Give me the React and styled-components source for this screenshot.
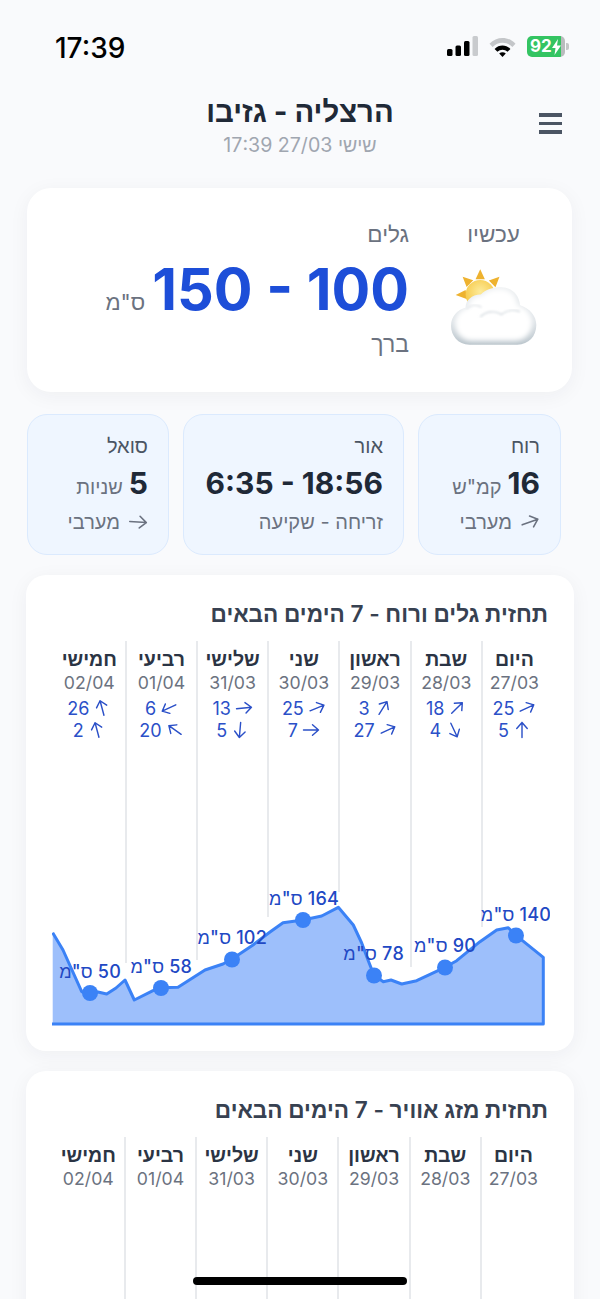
import React from "react";
import styled, { createGlobalStyle } from "styled-components";

const GlobalStyle = createGlobalStyle`
  html, body {
    margin: 0;
    padding: 0;
    background: #f9fafc;
  }
  * {
    box-sizing: border-box;
  }
`;

const days = [
  { name: "היום", date: "27/03", wave: [25, -25], wind: [5, -90], lineEnd: 286, weatherLine: true },
  { name: "שבת", date: "28/03", wave: [18, -45], wind: [4, 65], lineEnd: 326, weatherLine: true },
  { name: "ראשון", date: "29/03", wave: [3, -58], wind: [27, -25], lineEnd: 251, weatherLine: true },
  { name: "שני", date: "30/03", wave: [25, -22], wind: [7, 0], lineEnd: 276, weatherLine: true },
  { name: "שלישי", date: "31/03", wave: [13, -6], wind: [5, 95], lineEnd: 319, weatherLine: true },
  { name: "רביעי", date: "01/04", wave: [6, 155], wind: [20, -145], lineEnd: 322, weatherLine: true },
  { name: "חמישי", date: "02/04", wave: [26, -105], wind: [2, -105], lineEnd: 0, weatherLine: false },
];

const curve =
  "52.7,932.7 63,950 81.7,991.7 90,993 98,992 106.7,994 116,988 125,980 134.3,1000 153,990.7 160.7,987.7 178,987.3 205,970 223,964 231.7,959.3 253,945 270,932 283,922.7 303,920 321.7,916 338.3,907.3 353.3,925 361.7,943 368,960 374,975.3 383.3,981.7 391,980 401.7,984 416.7,980.7 445,967.3 456.7,960.7 480,941.7 496.7,930 508.3,927.7 516,935.3 543.3,957.3";

const dots = [
  { x: 516, y: 935.5, labelX: 551, labelY: 921, value: 140 },
  { x: 445, y: 967.5, labelX: 476, labelY: 952, value: 90 },
  { x: 374, y: 975.5, labelX: 404, labelY: 960, value: 78 },
  { x: 303, y: 920, labelX: 339, labelY: 905, value: 164 },
  { x: 232, y: 959.5, labelX: 267, labelY: 944, value: 102 },
  { x: 161, y: 988, labelX: 192, labelY: 973, value: 58 },
  { x: 90, y: 993, labelX: 121, labelY: 978, value: 50 },
];

const Page = styled.div`
  position: relative;
  width: 600px;
  height: 1299px;
  overflow: hidden;
  padding: 0 26px;
  background: #f9fafc;
  font-family: Inter, "Liberation Sans", sans-serif;
  color: #1f2937;
`;

const StatusBar = styled.div`
  direction: ltr;
  height: 94px;
  padding: 30px 9px 0 29px;
  display: flex;
  justify-content: space-between;
  align-items: flex-start;
`;

const Clock = styled.div`
  font-size: 28px;
  line-height: 36px;
  font-weight: 500;
  color: #000;
`;

const StatusIcons = styled.div`
  display: flex;
  align-items: center;
  gap: 11px;
  margin-top: 6px;
`;

const Battery = styled.div`
  width: 38px;
  height: 21px;
  border-radius: 5px;
  background: linear-gradient(90deg, #34c462 0, #34c462 90%, #b9bcbd 90%);
  color: #fff;
  font-size: 17px;
  line-height: 21px;
  font-weight: 700;
  display: flex;
  align-items: center;
  padding-left: 3px;
  position: relative;
  &::after {
    content: "";
    position: absolute;
    right: -4px;
    top: 7px;
    width: 3px;
    height: 7px;
    border-radius: 0 2px 2px 0;
    background: #c4c6c7;
  }
`;

const Header = styled.header`
  position: relative;
  height: 94px;
  text-align: center;
  padding-top: 1px;
`;

const CityName = styled.h1`
  margin: 0;
  font-size: 29.3px;
  line-height: 34px;
  font-weight: 700;
  color: #1f2937;
`;

const Updated = styled.div`
  margin-top: 3px;
  font-size: 19.6px;
  line-height: 26px;
  color: #a0a6b0;
`;

const MenuButton = styled.div`
  position: absolute;
  top: 19px;
  left: 513px;
  width: 23px;
  display: flex;
  flex-direction: column;
  gap: 5px;
  span {
    height: 3.5px;
    background: #4b5563;
  }
`;

const Hero = styled.section`
  width: 545px;
  height: 204px;
  margin-right: 2px;
  padding: 32px 35px 0 0;
  display: flex;
  gap: 41px;
  background: #fff;
  border-radius: 24px;
  box-shadow: 0 4px 20px rgba(30, 41, 59, 0.05);
`;

const NowColumn = styled.div`
  width: 87px;
  display: flex;
  flex-direction: column;
  align-items: center;
  svg {
    margin-top: 20px;
  }
`;

const MutedLabel = styled.div`
  font-size: 22.5px;
  line-height: 28px;
  color: #6b7280;
`;

const WaveColumn = styled.div`
  display: flex;
  flex-direction: column;
`;

const WaveRow = styled.div`
  display: flex;
  align-items: baseline;
  gap: 7px;
  margin-top: 7px;
  height: 68px;
`;

const WaveValue = styled.span`
  font-size: 57.5px;
  line-height: 68px;
  font-weight: 700;
  color: #1d4ed8;
  unicode-bidi: isolate;
  direction: ltr;
`;

const Unit = styled.span`
  font-size: ${(p) => p.$size || 20}px;
  color: #6b7280;
`;

const WaveState = styled.div`
  margin-top: 7px;
  font-size: 23px;
  line-height: 28px;
  color: #6b7280;
`;

const Stats = styled.section`
  display: grid;
  grid-template-columns: 143px 221px 142px;
  gap: 14px;
  height: 141px;
  margin: 22px 13px 20px 0;
`;

const StatCard = styled.div`
  padding: 18px 20px 0;
  background: #eff6ff;
  border: 1px solid #dbeafe;
  border-radius: 20px;
`;

const StatLabel = styled.div`
  font-size: 20px;
  line-height: 26px;
  color: #4b5563;
`;

const StatValue = styled.div`
  display: flex;
  align-items: baseline;
  gap: 6px;
  margin-top: 5px;
  height: 38px;
`;

const StatNumber = styled.span`
  font-size: 30px;
  line-height: 38px;
  font-weight: 700;
  color: #1f2937;
  unicode-bidi: isolate;
  direction: ltr;
`;

const StatFoot = styled.div`
  display: flex;
  align-items: center;
  gap: 8px;
  margin-top: 7px;
  font-size: 20px;
  line-height: 26px;
  color: #6b7280;
`;

const ForecastCard = styled.section`
  height: ${(p) => p.$height}px;
  margin-bottom: 20px;
  padding: 24px 22px 0;
  background: #fff;
  border-radius: 20px;
  box-shadow: 0 4px 20px rgba(30, 41, 59, 0.05);
`;

const CardTitle = styled.h2`
  margin: 0 4px 12px 0;
  font-size: 22.6px;
  line-height: 30px;
  font-weight: 600;
  color: #374151;
`;

const Columns = styled.div`
  position: relative;
  display: grid;
  grid-template-columns: repeat(7, 71.2px);
  align-items: start;
  height: ${(p) => p.$height}px;
  margin-right: ${(p) => p.$shift || 0}px;
`;

const DayColumn = styled.div`
  height: ${(p) => p.$lineEnd}px;
  padding-top: 7px;
  text-align: center;
  border-left: ${(p) => (p.$lined ? "2px solid #e8eaed" : "none")};
  &:first-child {
    padding-right: 6px;
  }
`;

const DayName = styled.div`
  font-size: 19.5px;
  line-height: 23px;
  font-weight: 600;
  color: #2b3444;
`;

const DayDate = styled.div`
  font-size: 17.7px;
  line-height: 23px;
  color: #6b7280;
`;

const WindRows = styled.div`
  margin-top: 3px;
`;

const WindRow = styled.div`
  display: flex;
  justify-content: center;
  align-items: center;
  gap: 4px;
  height: 22px;
  font-size: 18px;
  color: #2b50c8;
`;

const ArrowSvg = styled.svg`
  width: ${(p) => p.$size}px;
  height: ${(p) => p.$size}px;
  transform: rotate(${(p) => p.$deg}deg);
  color: ${(p) => p.$color};
  flex: none;
`;

const ChartSvg = styled.svg`
  position: absolute;
  top: 219px;
  left: 4px;
  width: 497.5px;
  height: 170px;
`;

const ChartLabel = styled.text`
  font-size: 18px;
  font-weight: 500;
  fill: #2148c4;
  direction: rtl;
  letter-spacing: 0.2px;
`;

const HomeBar = styled.div`
  position: absolute;
  left: 193px;
  bottom: 14px;
  width: 214px;
  height: 8px;
  border-radius: 4px;
  background: #000;
`;

const Arrow = ({ deg, size = 18, color = "#2b50c8" }) => (
  <ArrowSvg viewBox="0 0 24 24" fill="none" stroke="currentColor" strokeWidth="1.9" strokeLinecap="round" strokeLinejoin="round" $deg={deg} $size={size} $color={color}>
    <path d="M2 12h20M14 5l8 7-8 7" />
  </ArrowSvg>
);

const SignalIcon = () => (
  <svg width="31" height="21" viewBox="0 0 31 21">
    <rect x="0" y="13" width="5.5" height="7" rx="1.5" fill="#000" />
    <rect x="8.5" y="9.5" width="5.5" height="10.5" rx="1.5" fill="#000" />
    <rect x="17" y="5" width="5.5" height="15" rx="1.5" fill="#000" />
    <rect x="25.5" y="0" width="5.5" height="20" rx="1.5" fill="#c9cbce" />
  </svg>
);

const WifiIcon = () => (
  <svg width="27" height="20" viewBox="0 0 27 20">
    <path d="M0.5 6.8C7.6 -1 19.4 -1 26.5 6.8L23.4 10C18 4.3 9 4.3 3.6 10Z" fill="#c4c6c9" />
    <path d="M5.6 11.9C10 7.3 17 7.3 21.4 11.9L18.6 14.8C15.7 11.9 11.3 11.9 8.4 14.8Z" fill="#000" />
    <path d="M10.2 16.5C12 14.9 15 14.9 16.8 16.5L13.5 20Z" fill="#000" />
  </svg>
);

const cloudPath =
  "M118 281C82 281 62 252 62 224C62 196 82 176 106 170C106 148 124 130 152 130C166 114 188 108 212 108C244 108 266 128 270 162C300 172 319 194 319 222C319 256 296 281 262 281Z";

const WeatherEmoji = () => (
  <svg width="87" height="78" viewBox="60 50 260 235">
    <defs>
      <radialGradient id="sunFill" cx="0.5" cy="0.4" r="0.6">
        <stop offset="0" stopColor="#fdeb9a" />
        <stop offset="1" stopColor="#f6c744" />
      </radialGradient>
      <linearGradient id="cloudEdge" x1="0" y1="0" x2="0" y2="1">
        <stop offset="0" stopColor="#eceff1" />
        <stop offset="0.6" stopColor="#dfe4e8" />
        <stop offset="1" stopColor="#b9c4cb" />
      </linearGradient>
      <filter id="soft" x="-20%" y="-20%" width="140%" height="140%">
        <feGaussianBlur stdDeviation="9" />
      </filter>
      <filter id="softLine">
        <feGaussianBlur stdDeviation="3" />
      </filter>
      <clipPath id="cloudClip">
        <path d={cloudPath} />
      </clipPath>
    </defs>
    <path d="M150 54l14 30h-28zM97 76l32 11-20 20zM208 76l-12 32-20-20zM76 131l30-15 5 28z" fill="#eeb22f" />
    <circle cx="150" cy="130" r="44" fill="url(#sunFill)" />
    <path d={cloudPath} fill="url(#cloudEdge)" />
    <g clipPath="url(#cloudClip)">
      <path d={cloudPath} fill="#fff" filter="url(#soft)" transform="translate(19 16) scale(0.9)" />
      <path d="M150 198C168 178 196 178 214 190C230 178 252 174 270 182" fill="none" stroke="#dde2e6" strokeWidth="5" filter="url(#softLine)" />
      <path d="M108 174C122 160 140 160 154 168" fill="none" stroke="#e4e7ea" strokeWidth="5" filter="url(#softLine)" />
    </g>
  </svg>
);

const DayHeading = ({ day }) => (
  <>
    <DayName>{day.name}</DayName>
    <DayDate>{day.date}</DayDate>
  </>
);

const App = () => {
  return (
    <>
      <GlobalStyle />
      <Page dir="rtl">
        <StatusBar>
          <Clock>17:39</Clock>
          <StatusIcons>
            <SignalIcon />
            <WifiIcon />
            <Battery>
              92
              <svg width="9" height="16" viewBox="0 0 9 16">
                <path d="M6 0L0 9h3.5L2.5 16 9 6.5H5z" fill="#fff" />
              </svg>
            </Battery>
          </StatusIcons>
        </StatusBar>

        <Header>
          <CityName>הרצליה - גזיבו</CityName>
          <Updated>שישי 27/03 17:39</Updated>
          <MenuButton>
            <span />
            <span />
            <span />
          </MenuButton>
        </Header>

        <Hero>
          <NowColumn>
            <MutedLabel>עכשיו</MutedLabel>
            <WeatherEmoji />
          </NowColumn>
          <WaveColumn>
            <MutedLabel>גלים</MutedLabel>
            <WaveRow>
              <WaveValue>150 - 100</WaveValue>
              <Unit $size={22}>ס"מ</Unit>
            </WaveRow>
            <WaveState>ברך</WaveState>
          </WaveColumn>
        </Hero>

        <Stats>
          <StatCard>
            <StatLabel>רוח</StatLabel>
            <StatValue>
              <StatNumber>16</StatNumber>
              <Unit>קמ"ש</Unit>
            </StatValue>
            <StatFoot>
              <Arrow deg={-20} size={20} color="#6b7280" />
              מערבי
            </StatFoot>
          </StatCard>
          <StatCard>
            <StatLabel>אור</StatLabel>
            <StatValue>
              <StatNumber>6:35 - 18:56</StatNumber>
            </StatValue>
            <StatFoot>זריחה - שקיעה</StatFoot>
          </StatCard>
          <StatCard>
            <StatLabel>סואל</StatLabel>
            <StatValue>
              <StatNumber>5</StatNumber>
              <Unit>שניות</Unit>
            </StatValue>
            <StatFoot>
              <Arrow deg={4} size={20} color="#6b7280" />
              מערבי
            </StatFoot>
          </StatCard>
        </Stats>

        <ForecastCard $height={476}>
          <CardTitle>תחזית גלים ורוח - 7 הימים הבאים</CardTitle>
          <Columns $height={385}>
            {days.map((day) => (
              <DayColumn key={day.date} $lineEnd={day.lineEnd || 120} $lined={day.lineEnd > 0}>
                <DayHeading day={day} />
                <WindRows>
                  <WindRow>
                    <Arrow deg={day.wave[1]} />
                    {day.wave[0]}
                  </WindRow>
                  <WindRow>
                    <Arrow deg={day.wind[1]} />
                    {day.wind[0]}
                  </WindRow>
                </WindRows>
              </DayColumn>
            ))}
            <ChartSvg viewBox="52 860 497.5 170">
              <polygon points={`${curve} 543.3,1024 52.7,1024`} fill="#9dbffb" stroke="none" />
              <polyline points={`${curve} 543.3,1024 52,1024`} fill="none" stroke="#3b82f6" strokeWidth="3" strokeLinejoin="round" />
              {dots.map((dot) => (
                <g key={dot.value}>
                  <circle cx={dot.x} cy={dot.y} r="8" fill="#3b82f6" />
                  <ChartLabel x={dot.labelX} y={dot.labelY}>
                    {dot.value} ס"מ
                  </ChartLabel>
                </g>
              ))}
            </ChartSvg>
          </Columns>
        </ForecastCard>

        <ForecastCard $height={400}>
          <CardTitle>תחזית מזג אוויר - 7 הימים הבאים</CardTitle>
          <Columns $height={300} $shift={1}>
            {days.map((day) => (
              <DayColumn key={day.date} $lineEnd={300} $lined={day.weatherLine}>
                <DayHeading day={day} />
              </DayColumn>
            ))}
          </Columns>
        </ForecastCard>

        <HomeBar />
      </Page>
    </>
  );
};

export default App;
